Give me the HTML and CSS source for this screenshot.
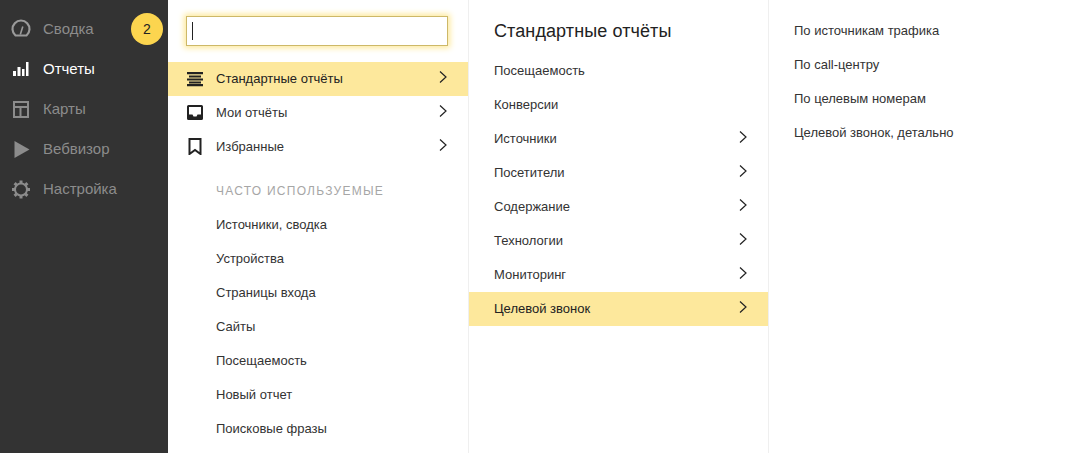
FILE: index.html
```html
<!DOCTYPE html>
<html lang="ru">
<head>
<meta charset="utf-8">
<title>Отчеты</title>
<link rel="stylesheet" href="styles.css">
</head>
<body>
<div class="app">
  <nav class="side">
    <a class="side-item">
      <svg class="side-icon" viewBox="0 0 20 20"><path d="M4.500 17.500A8.500 8.500 0 1 1 15.500 17.500Z" fill="none" stroke="#9a9a9a" stroke-width="2.200"/><path d="M9.300 16.500L11.800 8.500" stroke="#9a9a9a" stroke-width="1.600"/></svg>
      <span>Сводка</span>
      <b class="badge">2</b>
    </a>
    <a class="side-item active">
      <svg class="side-icon" viewBox="0 0 20 20"><path d="M2 13h3v5H2zM6.500 9h3v9h-3zM11 11h2.500v7H11zM15 4h2.500v14H15z" fill="#fff"/></svg>
      <span>Отчеты</span>
    </a>
    <a class="side-item">
      <svg class="side-icon" viewBox="0 0 20 20"><path d="M3 4h14v15H3zM3 9h14M9.500 9v10" fill="none" stroke="#8c8c8c" stroke-width="2"/></svg>
      <span>Карты</span>
    </a>
    <a class="side-item">
      <svg class="side-icon" viewBox="0 0 20 20"><path d="M3.500 3L18.500 11.500L3.500 20Z" fill="#8c8c8c"/></svg>
      <span>Вебвизор</span>
    </a>
    <a class="side-item">
      <svg class="side-icon" viewBox="0 0 20 20"><circle cx="10" cy="11.500" r="6" fill="none" stroke="#8c8c8c" stroke-width="2"/><path d="M10 2.500v3M10 17.500v3M1 11.500h3M16 11.500h3M3.600 5.100l2.100 2.100M14.300 15.800l2.100 2.100M3.600 17.900l2.100-2.100M14.300 7.200l2.100-2.100" stroke="#8c8c8c" stroke-width="3"/></svg>
      <span>Настройка</span>
    </a>
  </nav>

  <section class="col col-one">
    <div class="search-wrap"><div class="search"><i class="caret"></i></div></div>
    <ul class="list">
      <li class="row with-icon selected">
        <svg class="row-icon" viewBox="0 0 18 18"><path d="M1 3h16v2.200H1zM3 6.400h12v2H3zM1 9.500h16v2H1zM3 12.500h12v2H3zM1 15h16v2.200H1z" fill="#222"/></svg>
        <span>Стандартные отчёты</span>
        <svg class="chev" viewBox="0 0 10 14"><path d="M2 1.500L8 7L2 12.500" fill="none" stroke="#222" stroke-width="1.200"/></svg>
      </li>
      <li class="row with-icon">
        <svg class="row-icon" viewBox="0 0 18 18"><path fill-rule="evenodd" d="M2.500 2h13A1.500 1.500 0 0 1 17 3.500v12a1.500 1.500 0 0 1-1.500 1.500h-13A1.500 1.500 0 0 1 1 15.500v-12A1.500 1.500 0 0 1 2.500 2zM3 4v7.500h3.500l1 2h3l1-2H15V4z" fill="#222"/></svg>
        <span>Мои отчёты</span>
        <svg class="chev" viewBox="0 0 10 14"><path d="M2 1.500L8 7L2 12.500" fill="none" stroke="#222" stroke-width="1.200"/></svg>
      </li>
      <li class="row with-icon">
        <svg class="row-icon" viewBox="0 0 18 18"><path d="M3.500 2h11v15L9 13L3.500 17Z" fill="none" stroke="#222" stroke-width="2"/></svg>
        <span>Избранные</span>
        <svg class="chev" viewBox="0 0 10 14"><path d="M2 1.500L8 7L2 12.500" fill="none" stroke="#222" stroke-width="1.200"/></svg>
      </li>
    </ul>
    <h3 class="caption">ЧАСТО ИСПОЛЬЗУЕМЫЕ</h3>
    <ul class="list">
      <li class="row indent">Источники, сводка</li>
      <li class="row indent">Устройства</li>
      <li class="row indent">Страницы входа</li>
      <li class="row indent">Сайты</li>
      <li class="row indent">Посещаемость</li>
      <li class="row indent">Новый отчет</li>
      <li class="row indent">Поисковые фразы</li>
    </ul>
  </section>

  <section class="col col-two">
    <h2 class="title">Стандартные отчёты</h2>
    <ul class="list">
      <li class="row">Посещаемость</li>
      <li class="row">Конверсии</li>
      <li class="row"><span>Источники</span><svg class="chev" viewBox="0 0 10 14"><path d="M2 1.500L8 7L2 12.500" fill="none" stroke="#222" stroke-width="1.200"/></svg></li>
      <li class="row"><span>Посетители</span><svg class="chev" viewBox="0 0 10 14"><path d="M2 1.500L8 7L2 12.500" fill="none" stroke="#222" stroke-width="1.200"/></svg></li>
      <li class="row"><span>Содержание</span><svg class="chev" viewBox="0 0 10 14"><path d="M2 1.500L8 7L2 12.500" fill="none" stroke="#222" stroke-width="1.200"/></svg></li>
      <li class="row"><span>Технологии</span><svg class="chev" viewBox="0 0 10 14"><path d="M2 1.500L8 7L2 12.500" fill="none" stroke="#222" stroke-width="1.200"/></svg></li>
      <li class="row"><span>Мониторинг</span><svg class="chev" viewBox="0 0 10 14"><path d="M2 1.500L8 7L2 12.500" fill="none" stroke="#222" stroke-width="1.200"/></svg></li>
      <li class="row selected"><span>Целевой звонок</span><svg class="chev" viewBox="0 0 10 14"><path d="M2 1.500L8 7L2 12.500" fill="none" stroke="#222" stroke-width="1.200"/></svg></li>
    </ul>
  </section>

  <section class="col col-three">
    <ul class="list">
      <li class="row">По источникам трафика</li>
      <li class="row">По call-центру</li>
      <li class="row">По целевым номерам</li>
      <li class="row">Целевой звонок, детально</li>
    </ul>
  </section>
</div>
</body>
</html>
```
FILE: styles.css
```css
* { box-sizing: border-box; }
html, body { margin: 0; height: 100%; overflow: hidden; background: #fff; }
body { font-family: "Liberation Sans", Arial, sans-serif; font-size: 13px; color: #333; }
ul { list-style: none; margin: 0; padding: 0; }
h2, h3 { margin: 0; font-weight: 400; }

.app { display: flex; height: 453px; width: 1069px; }

.side { flex: 0 0 168px; background: #333; padding-top: 8px; }
.side-item { display: flex; align-items: center; height: 40px; padding-left: 11px; gap: 12px; font-size: 15px; color: #8c8c8c; }
.side-item.active { color: #fff; }
.side-icon { width: 20px; height: 20px; flex: none; overflow: visible; }
.badge { width: 32px; height: 32px; margin-left: auto; margin-right: 5px; margin-top: 2px; border-radius: 50%; background: #fcd54f; color: #222; font-weight: 400; font-size: 14px; display: flex; align-items: center; justify-content: center; }

.col { border-right: 1px solid #efefef; }
.col-one { flex: 0 0 301px; }
.col-two { flex: 0 0 300px; }
.col-three { flex: 1; border-right: 0; padding-top: 14px; }

.search-wrap { padding: 16px 20px 0 18px; height: 62px; }
.search { height: 30px; border: 1px solid #cdb868; box-shadow: 0 0 6px 2px #fde99a; padding: 5px 5px; background: #fff; }
.caret { display: block; width: 1px; height: 18px; background: #222; }

.row { display: flex; align-items: center; justify-content: space-between; height: 34px; padding: 0 20px 2px 25px; }
.row.selected { background: #fde89c; color: #222; }
.row.with-icon { padding-left: 18px; justify-content: flex-start; }
.row.with-icon .chev { margin-left: auto; }
.row.indent { padding-left: 48px; }
.row-icon { width: 18px; height: 18px; flex: none; margin-right: 12px; }
.chev { width: 10px; height: 14px; flex: none; margin-top: -3px; }

.caption { font-size: 12px; letter-spacing: 1.25px; color: #a6a6a6; padding: 19px 0 0 48px; line-height: 16px; height: 44px; }
.title { font-size: 18px; letter-spacing: 0.1px; color: #222; padding: 20px 0 0 25px; height: 54px; line-height: 22px; }
```
